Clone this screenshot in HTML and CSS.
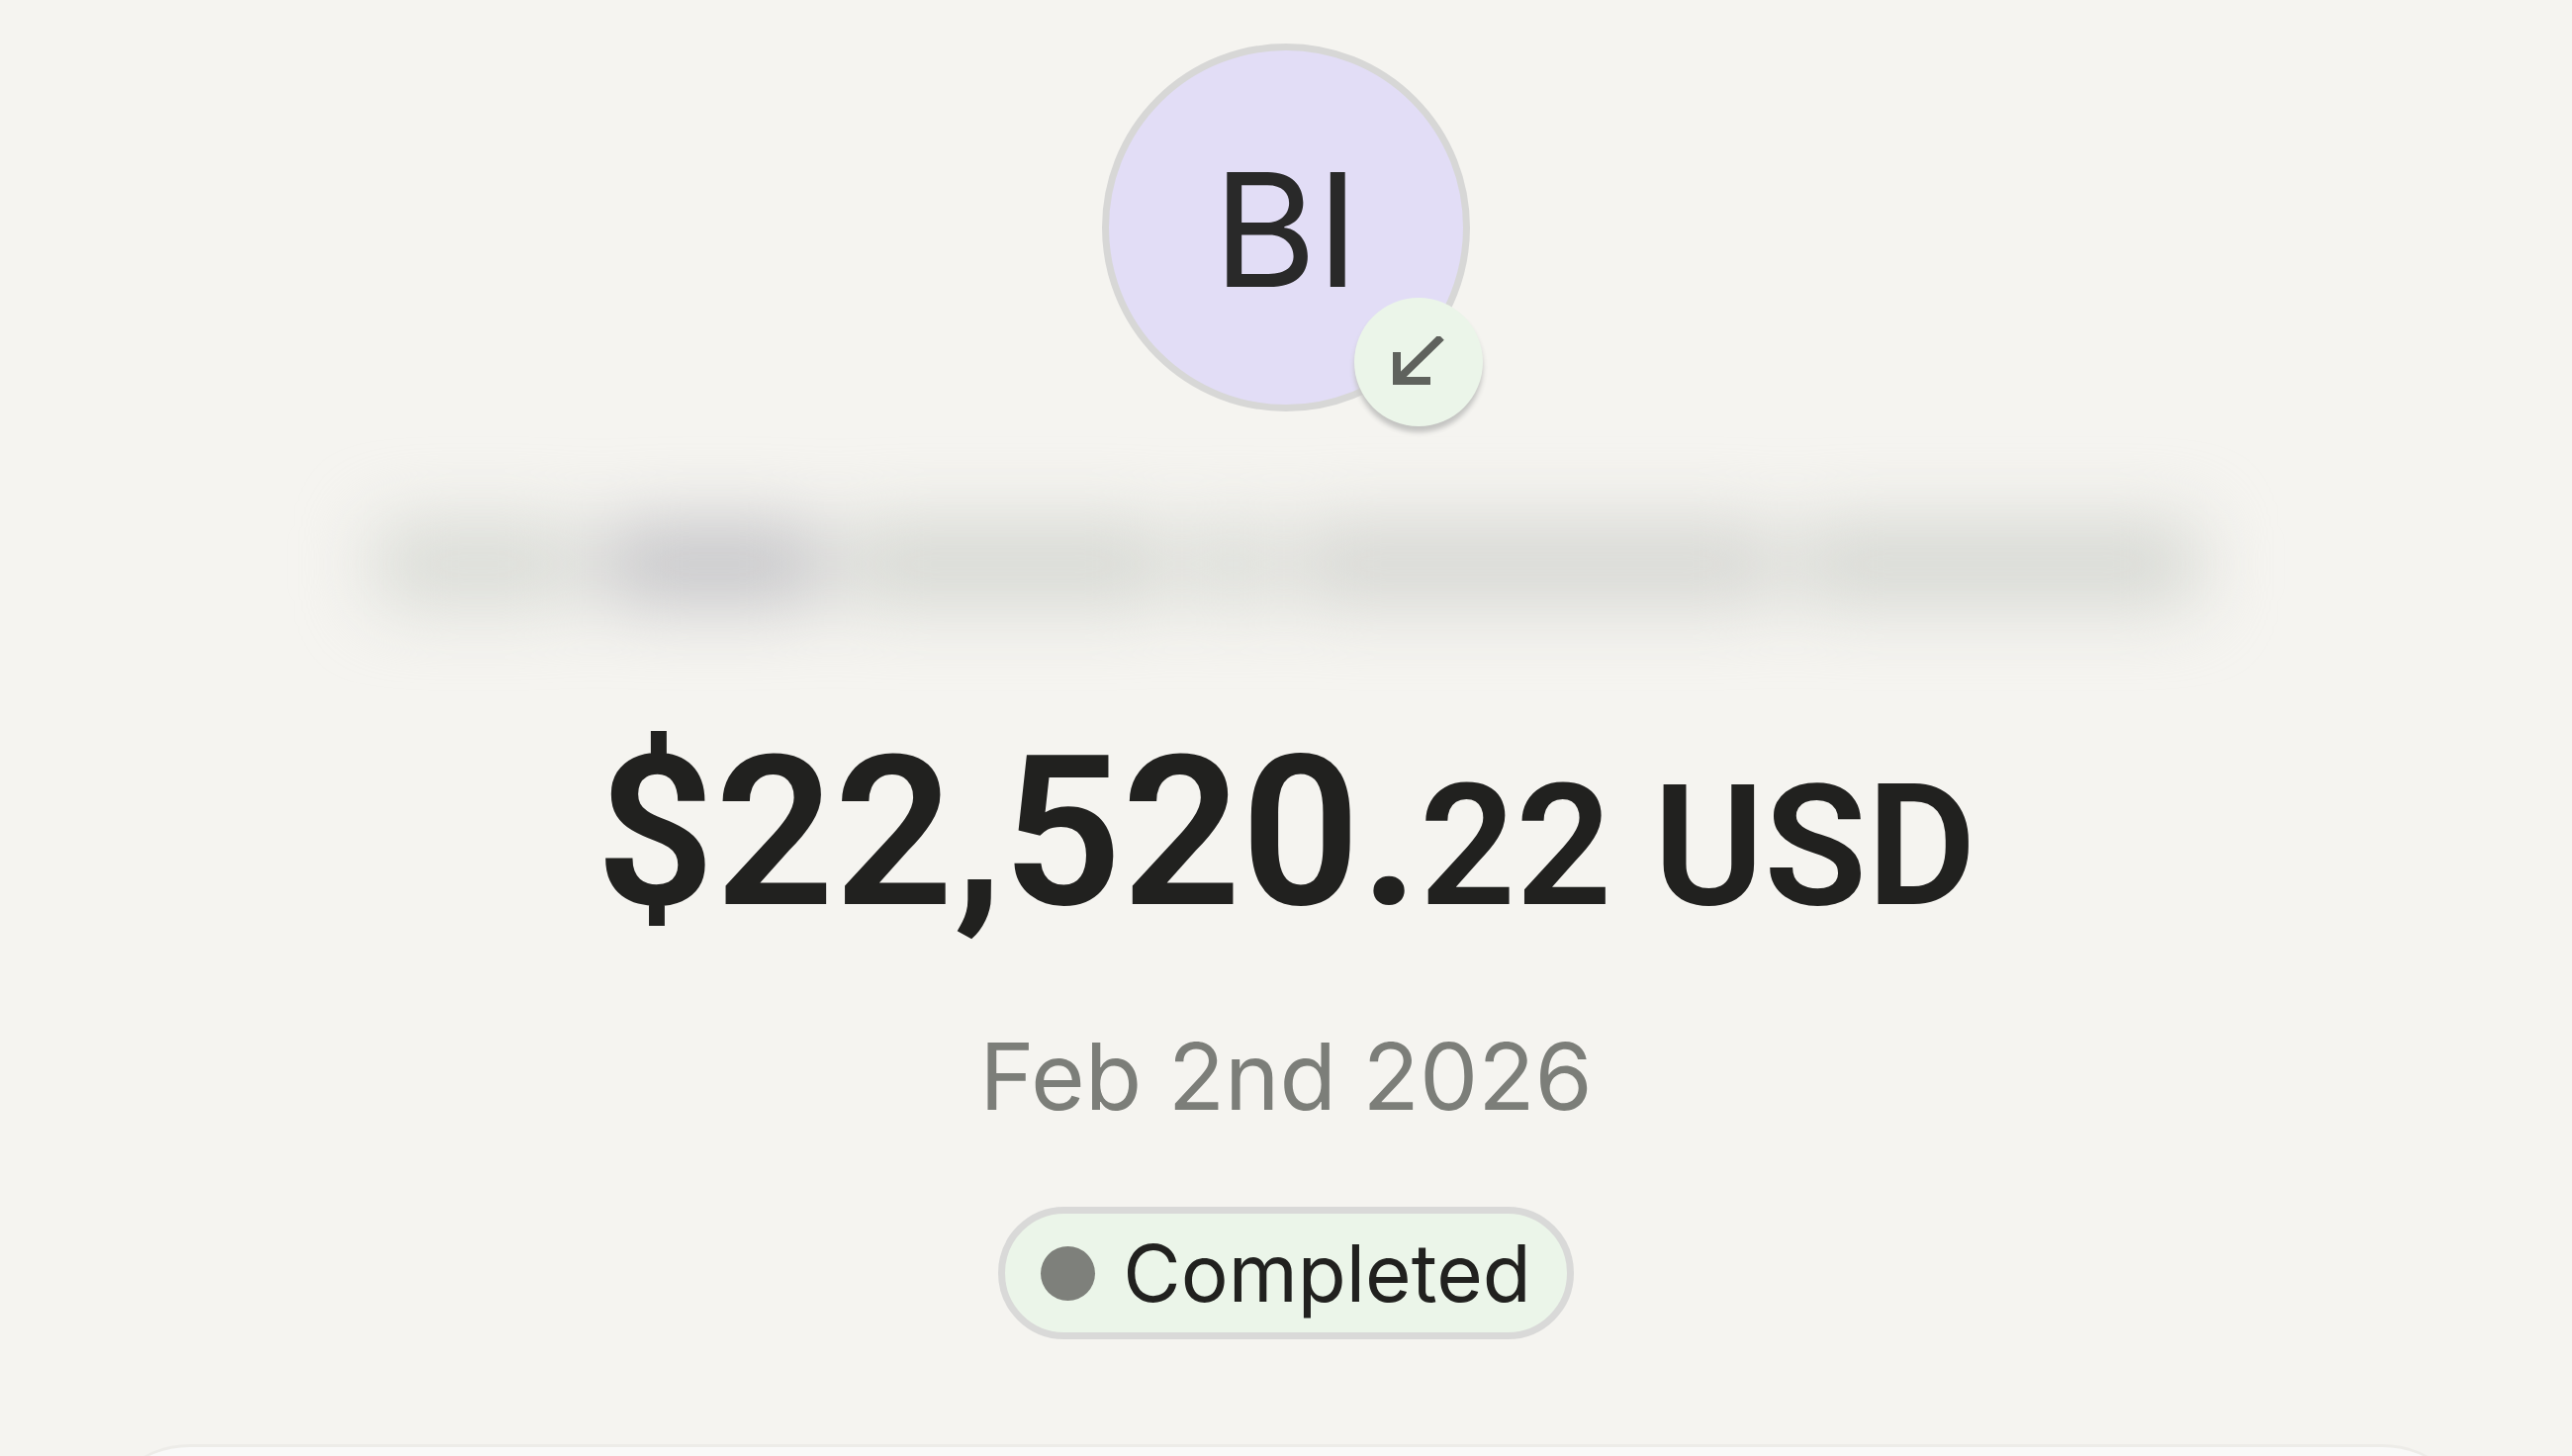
FILE: index.html
```html
<!DOCTYPE html>
<html lang="en">
<head>
    <meta charset="UTF-8">
    <meta name="viewport" content="width=device-width, initial-scale=1.0">
    <title>Transaction details</title>
    <link rel="stylesheet" href="styles.css">
</head>
<body>
    <main class="summary">
        <div class="avatar">
            <span class="initials">BI</span>
            <span class="badge">
                <svg class="arrow" viewBox="0 0 52 52" aria-label="Received">
                    <path d="M49 1 L6 43 M4 16 V45 H38" fill="none" stroke="currentColor" stroke-width="8"/>
                </svg>
            </span>
        </div>

        <!-- sender name is hidden -->
        <div class="sender" aria-hidden="true">
            <span class="word word-1"></span>
            <span class="word word-2"></span>
            <span class="word word-3"></span>
            <span class="word word-4"></span>
            <span class="word word-5"></span>
            <span class="word word-6"></span>
        </div>

        <h1 class="amount">$22,520.<span class="small">22 USD</span></h1>
        <p class="date">Feb 2nd 2026</p>
        <div class="status"><span class="dot"></span>Completed</div>
    </main>
    <section class="panel"></section>
</body>
</html>
```

FILE: styles.css
```css
* {
    box-sizing: border-box;
}
body {
    margin: 0;
    height: 100vh;
    overflow: hidden;
    background-color: #f5f4f0;
    color: #21211f;
    font-family: Inter, "Liberation Sans", sans-serif;
}
.summary {
    display: flex;
    flex-direction: column;
    align-items: center;
    padding: 44px 0 106px;
}
.avatar {
    position: relative;
    display: flex;
    align-items: center;
    justify-content: center;
    width: 372px;
    height: 372px;
    padding-top: 4px;
    border: 7px solid #d7d7d6;
    border-radius: 50%;
    background-color: #e2ddf6;
}
.initials {
    font-size: 160px;
    line-height: 160px;
    color: #292929;
}
.badge {
    position: absolute;
    right: -20px;
    bottom: -22px;
    display: flex;
    align-items: center;
    justify-content: center;
    width: 130px;
    height: 130px;
    border-radius: 50%;
    background-color: #ebf5e9;
    box-shadow: 0 6px 5px #c4c4c2;
}
.arrow {
    width: 52px;
    height: 52px;
    color: #5f625d;
}
.sender {
    display: flex;
    justify-content: center;
    gap: 20px;
    width: 71%;
    height: 84px;
    margin-top: 112px;
    filter: blur(36px);
}
.word {
    border-radius: 16px;
    background-color: #d9dbd6;
}
.word-1 {
    flex: 20;
}
.word-2 {
    flex: 21;
    background-color: #c6c6c9;
}
.word-3 {
    flex: 31;
    background-color: #d6d8d3;
}
.word-4 {
    flex: 8;
}
.word-5 {
    flex: 46;
    background-color: #d6d7d3;
}
.word-6 {
    flex: 38;
    background-color: #d6d8d3;
}
.amount {
    margin: 110px 0 0;
    font-family: Roboto, "Liberation Sans", sans-serif;
    font-size: 211px;
    line-height: 240px;
    font-weight: 600;
    white-space: nowrap;
}
.small {
    font-size: 170px;
}
.date {
    margin: 52px 0 0;
    font-size: 94px;
    line-height: 120px;
    color: #7c7e79;
}
.status {
    display: flex;
    align-items: center;
    gap: 28px;
    height: 134px;
    margin-top: 72px;
    padding: 0 36px;
    border: 7px solid #d9d9d8;
    border-radius: 67px;
    background-color: #ebf5e9;
    font-size: 80px;
    line-height: 96px;
}
.dot {
    width: 55px;
    height: 55px;
    border-radius: 50%;
    background-color: #7e807b;
}
.panel {
    height: 320px;
    margin: 0 96px;
    border-top: 3px solid #edece8;
    border-radius: 96px;
    background-color: #f9f9f8;
}
```
